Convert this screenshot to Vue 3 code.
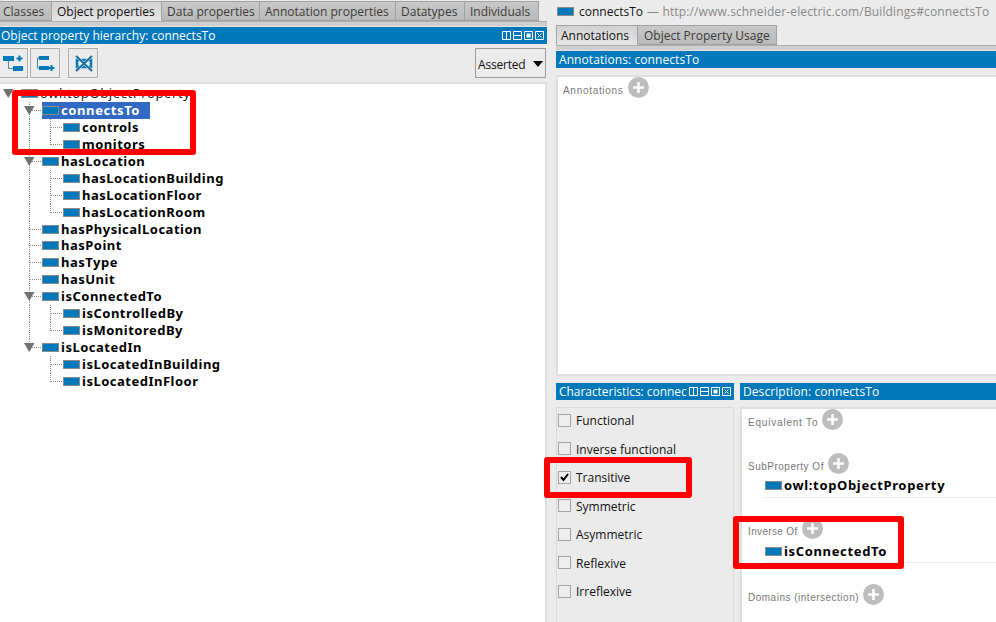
<script setup>
const tabs = [
  { label: 'Classes', cls: 't-classes' },
  { label: 'Object properties', cls: 't-object active' },
  { label: 'Data properties', cls: 't-data' },
  { label: 'Annotation properties', cls: 't-annotation' },
  { label: 'Datatypes', cls: 't-datatypes' },
  { label: 'Individuals', cls: 't-individuals' },
]

const rows = [
  { label: 'owl:topObjectProperty', level: 0, open: true },
  { label: 'connectsTo', level: 1, open: true, selected: true },
  { label: 'controls', level: 2 },
  { label: 'monitors', level: 2, last: true },
  { label: 'hasLocation', level: 1, open: true },
  { label: 'hasLocationBuilding', level: 2 },
  { label: 'hasLocationFloor', level: 2 },
  { label: 'hasLocationRoom', level: 2, last: true },
  { label: 'hasPhysicalLocation', level: 1, short: true },
  { label: 'hasPoint', level: 1 },
  { label: 'hasType', level: 1 },
  { label: 'hasUnit', level: 1 },
  { label: 'isConnectedTo', level: 1, open: true },
  { label: 'isControlledBy', level: 2 },
  { label: 'isMonitoredBy', level: 2, last: true },
  { label: 'isLocatedIn', level: 1, open: true, last: true },
  { label: 'isLocatedInBuilding', level: 2, noTrunk: true },
  { label: 'isLocatedInFloor', level: 2, last: true, noTrunk: true },
]

const guideWidth = (r) => 21 + r.level * 21

const characteristics = [
  { label: 'Functional' },
  { label: 'Inverse functional' },
  { label: 'Transitive', checked: true },
  { label: 'Symmetric' },
  { label: 'Asymmetric' },
  { label: 'Reflexive' },
  { label: 'Irreflexive' },
]

const sections = [
  { label: 'Equivalent To', cls: 's-equivalent' },
  { label: 'SubProperty Of', cls: 's-sub', value: 'owl:topObjectProperty' },
  { label: 'Inverse Of', cls: 's-inverse', value: 'isConnectedTo' },
  { label: 'Domains (intersection)', cls: 's-domains' },
]
</script>

<template>
  <div class="app">
    <section class="left">
      <nav class="tabs">
        <div v-for="t in tabs" :key="t.label" class="tab" :class="t.cls"><span>{{ t.label }}</span></div>
      </nav>
      <div class="strip"></div>
      <header class="bar">
        <span class="bar-title hierarchy">Object property hierarchy: connectsTo</span>
        <svg class="winctl" width="42" height="9" viewBox="0 0 42 9" fill="none" stroke="#fff">
          <path d="M.5.5h8v8h-8zM4.500.5v8M11.500.5h8v8h-8zM11.500 4.500h8M22.500.5h8v8h-8zM33.500.5h8v8h-8zM35.500 2.500l4 4M39.500 2.500l-4 4" />
          <rect x="24.500" y="2.500" width="4" height="4" fill="#fff" stroke="none" />
        </svg>
      </header>
      <div class="toolbar">
        <button class="tool first">
          <svg width="28" height="28" viewBox="0 0 28 28">
            <path d="M3 7h11v5H3zM13 17h10v5H13z" fill="#0078b9" />
            <path d="M8.500 12v7.500H13" fill="none" stroke="#5b8ba5" />
            <path d="M19.500 6.500v6M16.500 9.500h6" stroke="#0078b9" stroke-width="2" />
          </svg>
        </button>
        <button class="tool">
          <svg width="28" height="28" viewBox="0 0 28 28">
            <path d="M8 7h10v4H8zM8 17h10v4H8z" fill="#0078b9" />
            <path d="M8 9H6.500v10H8" fill="none" stroke="#3c7fa4" />
            <path d="M20.500 16v6M17.500 19h6" stroke="#0078b9" stroke-width="2" />
          </svg>
        </button>
        <button class="tool gap">
          <svg width="28" height="28" viewBox="0 0 28 28">
            <path d="M8 11h14v7H8z" fill="none" stroke="#0078b9" stroke-width="2.500" />
            <path d="M7 7l16 15M23 7l-16 15" stroke="#ececec" stroke-width="3" />
            <path d="M7 7l16 15M23 7l-16 15" stroke="#1b6f9f" stroke-width="2" />
          </svg>
        </button>
        <div class="select">
          <span>Asserted</span>
          <svg width="10" height="6" viewBox="0 0 10 6"><path d="M0 0h10L5 6z" fill="#000" /></svg>
        </div>
      </div>
      <div class="tree">
        <div v-for="r in rows" :key="r.label" class="row" :class="{ root: r.level === 0, short: r.short }">
          <svg class="guide" :width="guideWidth(r)" height="17">
            <g fill="none" stroke="#8a8a8a" stroke-dasharray="1 1">
              <path v-if="r.level === 1" :d="r.last ? 'M29.500 0v9M30 8.500h11' : 'M29.500 0v17M30 8.500h11'" />
              <path v-if="r.level === 2 && !r.noTrunk" d="M29.500 0v17" />
              <path v-if="r.level === 2" :d="r.last ? 'M50.500 0v9M51 8.500h12' : 'M50.500 0v17M51 8.500h12'" />
            </g>
            <path v-if="r.open" :d="r.level ? 'M24 4h10.500l-5.250 9z' : 'M3 4h10.500l-5.250 9z'" fill="#707070" />
          </svg>
          <span class="node" :class="{ selected: r.selected }"><i class="chip"></i><span>{{ r.label }}</span></span>
        </div>
      </div>
    </section>

    <section class="right">
      <div class="heading">
        <i class="chip"></i><span class="name">connectsTo</span><span class="uri">— http://www.schneider-electric.com/Buildings#connectsTo</span>
      </div>
      <nav class="tabs rtabs">
        <div class="tab active t-ann"><span>Annotations</span></div>
        <div class="tab t-usage"><span>Object Property Usage</span></div>
      </nav>
      <div class="strip rstrip"></div>
      <header class="bar"><span class="bar-title anntitle">Annotations: connectsTo</span></header>
      <div class="annotations">
        <div class="label l-ann"><span>Annotations</span>
          <svg class="plus" width="21" height="21" viewBox="0 0 21 21"><circle cx="10.500" cy="10.500" r="10.500" fill="#bdbdbd" /><path d="M10.500 5v11M5 10.500h11" stroke="#fff" stroke-width="2.500" /></svg>
        </div>
      </div>
      <div class="bottom">
        <div class="chars">
          <header class="bar">
            <span class="bar-title chartitle">Characteristics: connec</span>
            <svg class="winctl" width="42" height="9" viewBox="0 0 42 9" fill="none" stroke="#fff">
              <path d="M.5.5h8v8h-8zM4.500.5v8M11.500.5h8v8h-8zM11.500 4.500h8M22.500.5h8v8h-8zM33.500.5h8v8h-8zM35.500 2.500l4 4M39.500 2.500l-4 4" />
              <rect x="24.500" y="2.500" width="4" height="4" fill="#fff" stroke="none" />
            </svg>
          </header>
          <div class="checks">
            <label v-for="c in characteristics" :key="c.label" class="check">
              <span class="box">
                <svg v-if="c.checked" width="11" height="11" viewBox="0 0 11 11"><path d="M2 5l2.500 3L9 2" fill="none" stroke="#000" stroke-width="2" /></svg>
              </span>
              <span>{{ c.label }}</span>
            </label>
          </div>
        </div>
        <div class="desc">
          <header class="bar"><span class="bar-title desctitle">Description: connectsTo</span></header>
          <div class="descbody">
            <div v-for="s in sections" :key="s.label" class="section" :class="s.cls">
              <div class="label"><span>{{ s.label }}</span>
                <svg class="plus" width="21" height="21" viewBox="0 0 21 21"><circle cx="10.500" cy="10.500" r="10.500" fill="#bdbdbd" /><path d="M10.500 5v11M5 10.500h11" stroke="#fff" stroke-width="2.500" /></svg>
              </div>
              <div v-if="s.value" class="value"><i class="chip"></i><span>{{ s.value }}</span></div>
            </div>
          </div>
        </div>
      </div>
    </section>

    <div class="mark m-tree"></div>
    <div class="mark m-transitive"></div>
    <div class="mark m-inverse"></div>
  </div>
</template>

<style>
body { margin: 0; overflow: hidden; }
</style>

<style scoped>
* { box-sizing: border-box; }
.app { position: relative; display: flex; width: 996px; height: 622px; overflow: hidden; background: #ebebeb; font: 12px/17px "Open Sans", sans-serif; color: #111; white-space: nowrap; }
.left { width: 547px; display: flex; flex-direction: column; }
.right { width: 440px; margin-left: 9px; display: flex; flex-direction: column; }
.tabs { display: flex; height: 21px; padding-top: 1px; flex: none; }
.tab { height: 20px; border: 1px solid #a2a2a2; border-left: 0; background: linear-gradient(#c8c8c8, #b9b9b9); color: #3a3a3a; padding-left: 5px; line-height: 19px; }
.tab.active { background: linear-gradient(#d2d2d2, #e4e4e4); border-bottom-color: #e4e4e4; color: #111; }
.t-classes { width: 52px; padding-left: 3px; }
.t-object { width: 110px; }
.t-data { width: 98px; }
.t-annotation { width: 136px; }
.t-datatypes { width: 69px; }
.t-individuals { width: 74px; }
.strip { height: 6px; flex: none; background: #cfcfcf; border-top: 1px solid #adadad; border-bottom: 1px solid #e4e4e4; }
.bar { height: 17px; flex: none; background: #0078b9; color: #fff; display: flex; align-items: center; justify-content: space-between; padding: 0 3px 0 1px; }
.bar-title { line-height: 17px; }
.winctl { flex: none; }
.toolbar { height: 40px; flex: none; display: flex; padding-top: 4px; border-bottom: 2px solid #e0e0e0; }
.tool { width: 30px; height: 30px; padding: 0; margin: 0 0 0 2px; border: 1px solid #aaa; background: #ececec; display: block; outline: 1px solid #f5f5f5; }
.tool svg { display: block; }
.tool.first { width: 28px; margin-left: 0; border-left: 0; }
.tool.gap { margin-left: 8px; }
.select { margin-left: auto; margin-right: 1px; width: 71px; height: 30px; border: 1px solid #9c9c9c; display: flex; align-items: center; justify-content: space-between; padding: 2px 2px 0 2px; }
.select span { letter-spacing: -.2px; }
.tree { flex: 1; background: #fff; border-right: 2px solid #dfdfdf; padding-top: 1px; font-family: "Noto Sans", sans-serif; font-weight: 700; color: #000; }
.row { display: flex; height: 17px; align-items: center; font-size: 13px; letter-spacing: .5px; }
.row.short { height: 16px; }
.row.root { font-weight: 400; color: #222; letter-spacing: .6px; }
.guide { flex: none; display: block; }
.node { display: flex; align-items: center; height: 17px; padding-right: 10px; }
.node.selected { background: #316ac5; color: #fff; letter-spacing: .6px; }
.chip { width: 17px; height: 9px; border: 1px solid #8a8a8a; background: #0078b9; flex: none; margin-right: 2px; }
.heading { height: 25px; flex: none; display: flex; align-items: center; padding: 0 0 3px 1px; }
.heading .chip { margin-right: 5px; }
.name { margin-right: 4px; }
.uri { color: #888; letter-spacing: .135px; }
.rtabs { height: 20px; padding-top: 0; }
.rtabs .tab { line-height: 20px; }
.t-ann { width: 82px; border-left: 1px solid #a2a2a2; padding-left: 4px; }
.t-usage { width: 139px; padding-left: 6px; }
.annotations { margin: 7px 0 0; height: 301px; flex: none; background: #fff; border: 2px solid #dfdfdf; border-right: 0; padding: 0 0 0 5px; }
.label { display: flex; align-items: center; height: 21px; font: 10px/12px "Liberation Sans", sans-serif; letter-spacing: .5px; color: #777; }
.label span { margin-top: 7px; }
.l-ann { letter-spacing: .7px; }
.plus { margin-left: 4px; flex: none; }
.bottom { display: flex; flex: 1; margin-top: 7px; gap: 6px; min-height: 0; }
.chars { width: 178px; display: flex; flex-direction: column; }
.desc { width: 256px; display: flex; flex-direction: column; }
.bar-title.chartitle, .bar-title.anntitle, .bar-title.desctitle { padding-left: 2px; letter-spacing: .08px; }
.bar-title.chartitle { letter-spacing: -.05px; }
.checks { margin-top: 7px; flex: 1; border: 1px solid #dadada; border-bottom: 0; padding: 0 0 0 1px; }
.check { display: flex; align-items: center; height: 28.500px; gap: 5px; padding-bottom: 3px; }
.check .box { width: 13px; height: 13px; border: 1px solid #a5a5a5; background: #eee; margin-top: -1px; }
.box svg { display: block; }
.descbody { margin-top: 7px; flex: 1; min-height: 0; background: #fff; border: 2px solid #dfdfdf; border-right: 0; border-bottom: 0; padding-left: 6px; }
.section { height: 65.500px; }
.s-equivalent { height: 43.500px; }
.s-equivalent .label { letter-spacing: .8px; }
.s-sub .label { letter-spacing: .5px; }
.s-inverse .label { letter-spacing: .35px; }
.value { margin-left: 15px; height: 24px; border-bottom: 1px solid #eee; display: flex; align-items: center; padding: 1px 0 0 2px; font: 700 13px/17px "Noto Sans", sans-serif; letter-spacing: .65px; color: #000; }
.mark { position: absolute; border: 6px solid #f00; border-radius: 3px; }
.m-tree { left: 12px; top: 90px; width: 184px; height: 65px; }
.m-transitive { left: 544px; top: 457px; width: 148px; height: 41px; }
.m-inverse { left: 733px; top: 516px; width: 171px; height: 53px; }
</style>
